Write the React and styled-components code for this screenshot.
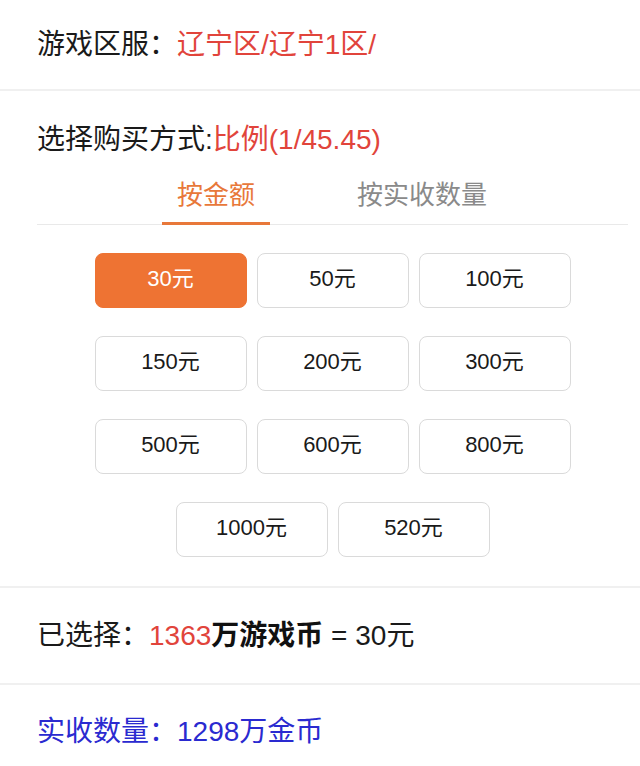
import React, { useState } from "react";
import styled, { createGlobalStyle } from "styled-components";

const GlobalStyle = createGlobalStyle`
  html, body { margin: 0; padding: 0; background: #ffffff; }
  body { font-family: "Liberation Sans", "Noto Sans CJK SC", sans-serif; color: #1a1a1a; }
`;

const Page = styled.div`
  width: 640px;
  background: #fff;
`;

const Section = styled.div`
  display: flex;
  align-items: center;
  height: ${(p) => p.$h}px;
  padding-left: 37px;
  border-bottom: ${(p) => (p.$last ? "none" : "2px solid #f0f0f0")};
  font-size: 28px;
  line-height: 28px;
  color: ${(p) => p.$color || "#1a1a1a"};
`;

const Red = styled.span`
  color: #e1443b;
`;

const Bold = styled.span`
  font-weight: 700;
  color: #111;
`;

const BuySection = styled.div`
  padding: 35px 12px 29px 37px;
  border-bottom: 2px solid #f0f0f0;
`;

const Title = styled.div`
  font-size: 28px;
  line-height: 28px;
  white-space: nowrap;
`;

const Tabs = styled.div`
  display: flex;
  gap: 72px;
  margin-top: 28px;
  padding-left: 125px;
  border-bottom: 1.5px solid #e9e9e9;
`;

const Tab = styled.div`
  padding: 0 15px 14px;
  font-size: 26px;
  line-height: 26px;
  color: ${(p) => (p.$active ? "#e8783a" : "#8a8a8a")};
  border-bottom: 3px solid ${(p) => (p.$active ? "#e8783a" : "transparent")};
  margin-bottom: -1px;
  cursor: pointer;
`;

const Grid = styled.div`
  display: flex;
  flex-wrap: wrap;
  justify-content: center;
  column-gap: 10px;
  row-gap: 28px;
  width: 476px;
  margin: 28px auto 0;
`;

const Amount = styled.button`
  box-sizing: border-box;
  width: 152px;
  height: 55px;
  border-radius: 8px;
  border: 1.5px solid ${(p) => (p.$active ? "#ee7333" : "#dadada")};
  background: ${(p) => (p.$active ? "#ee7333" : "#fff")};
  color: ${(p) => (p.$active ? "#fff" : "#1a1a1a")};
  font-family: "Liberation Sans", "Noto Sans CJK SC", sans-serif;
  font-size: 22px;
  line-height: 22px;
  padding: 0 0 3px;
  cursor: pointer;
`;

const amounts = [30, 50, 100, 150, 200, 300, 500, 600, 800, 1000, 520];

export default function App() {
  const [tab, setTab] = useState(0);
  const [sel, setSel] = useState(30);
  return (
    <Page>
      <GlobalStyle />
      <Section $h={89}>
        游戏区服：<Red>辽宁区/辽宁1区/</Red>
      </Section>
      <BuySection>
        <Title>
          选择购买方式:<Red>比例(1/45.45)</Red>
        </Title>
        <Tabs>
          <Tab $active={tab === 0} onClick={() => setTab(0)}>按金额</Tab>
          <Tab $active={tab === 1} onClick={() => setTab(1)}>按实收数量</Tab>
        </Tabs>
        <Grid>
          {amounts.map((a) => (
            <Amount key={a} $active={sel === a} onClick={() => setSel(a)}>
              {a}元
            </Amount>
          ))}
        </Grid>
      </BuySection>
      <Section $h={95}>
        已选择：<Red>1363</Red>
        <Bold>万游戏币</Bold>&nbsp;= 30元
      </Section>
      <Section $h={94} $last $color="#2a2ad0">
        实收数量：1298万金币
      </Section>
    </Page>
  );
}
